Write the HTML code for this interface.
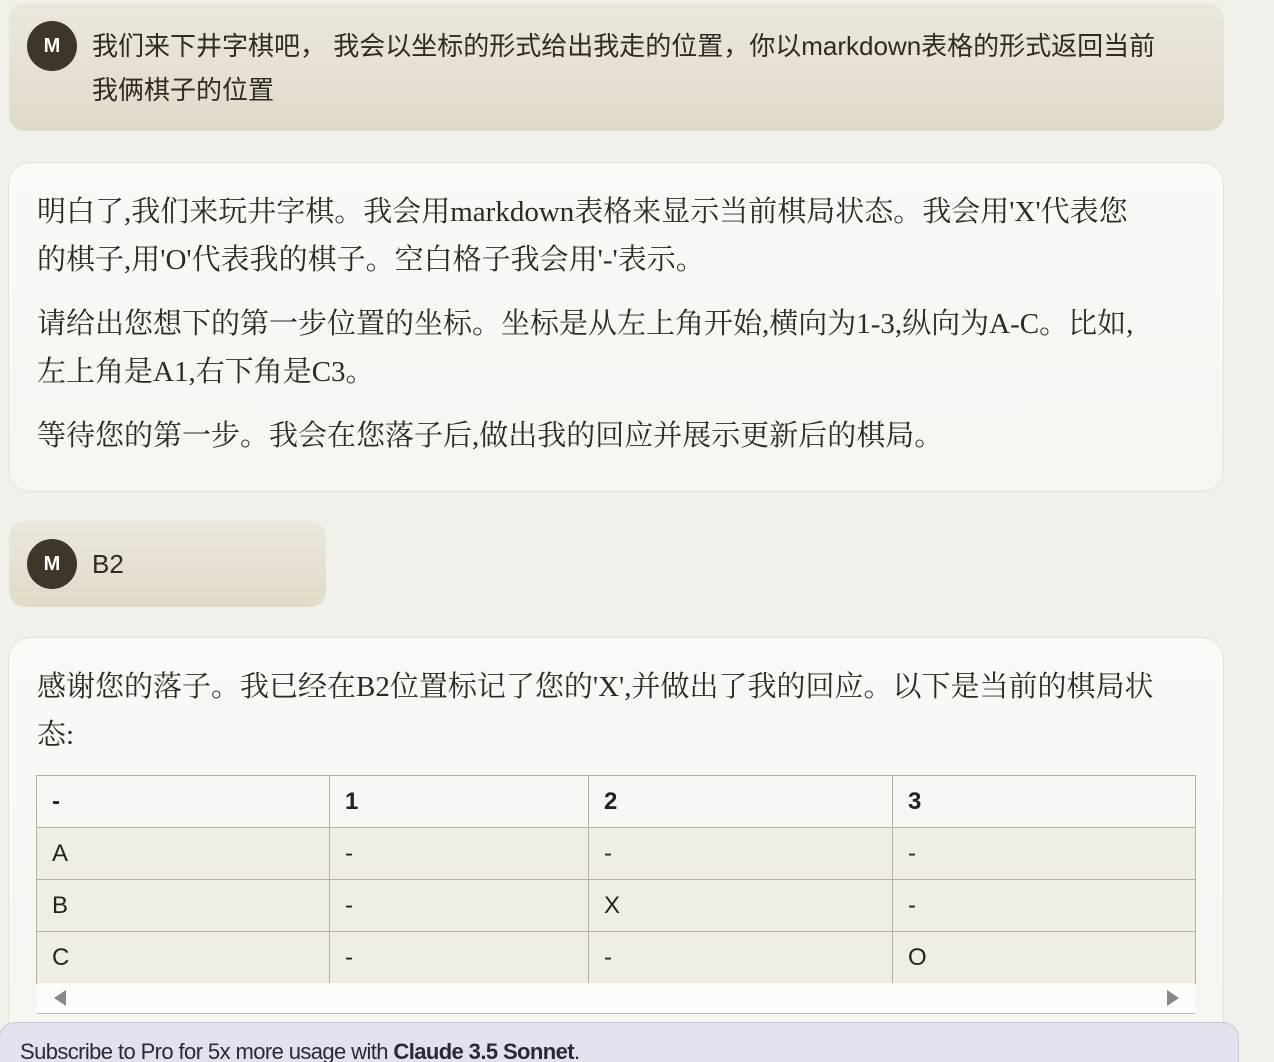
<!DOCTYPE html>
<html style="overflow:hidden;height:1062px"><head><meta charset="utf-8"><style>
body{margin:0;width:1274px;height:1062px;overflow:hidden;background:#f2f0ea;position:relative;font-family:"Liberation Sans","Noto Sans CJK SC",sans-serif;}
.u{position:absolute;left:9px;border-radius:16px;background:linear-gradient(#ebe7dd,#e0dac8);}
.av{position:absolute;left:27px;width:50px;height:50px;border-radius:50%;background:#3d3729;color:#fff;font-weight:bold;font-size:20px;text-align:center;line-height:50px;}
.ut{position:absolute;left:83px;color:#2f2b22;font-size:26px;line-height:44px;font-family:"Liberation Sans","Noto Sans CJK SC",sans-serif;}
.a{position:absolute;left:8px;width:1214px;border:1px solid #e5e1d6;border-radius:22px;background:linear-gradient(#faf9f6,#f6f5f0);overflow:hidden}
.at{position:absolute;left:28px;width:1100px;font-family:"Liberation Serif","Noto Serif CJK SC",serif;font-size:29px;line-height:48px;color:#2c2a25;}
.at p{margin:0 0 16px 0}
table{position:absolute;left:27px;top:137px;border-collapse:collapse;width:1160px;font-size:24px;color:#222;}
td,th{border:1px solid #b5b0a4;height:51px;padding:0 15px;text-align:left;}
th{background:#f7f6f2;font-weight:bold}
td{background:#f0ede5}
</style></head><body>
<div class="u" style="top:3px;width:1215px;height:128px"><div class="av" style="left:18px;top:18px">M</div>
<div class="ut" style="top:21px;width:1085px">我们来下井字棋吧， 我会以坐标的形式给出我走的位置，你以markdown表格的形式返回当前我俩棋子的位置</div></div>
<div class="a" style="top:162px;height:328px"><div class="at" style="top:25px">
<p>明白了,我们来玩井字棋。我会用markdown表格来显示当前棋局状态。我会用'X'代表您的棋子,用'O'代表我的棋子。空白格子我会用'-'表示。</p>
<p>请给出您想下的第一步位置的坐标。坐标是从左上角开始,横向为1-3,纵向为A-C。比如,左上角是A1,右下角是C3。</p>
<p>等待您的第一步。我会在您落子后,做出我的回应并展示更新后的棋局。</p></div></div>
<div class="u" style="top:521px;width:317px;height:86px"><div class="av" style="left:18px;top:18px">M</div>
<div class="ut" style="top:21px">B2</div></div>
<div class="a" style="top:637px;height:420px"><div class="at" style="top:25px;width:1120px">感谢您的落子。我已经在B2位置标记了您的'X',并做出了我的回应。以下是当前的棋局状态:</div>
<table><tr><th style="width:262px">-</th><th style="width:228px">1</th><th style="width:273px">2</th><th>3</th></tr>
<tr><td>A</td><td>-</td><td>-</td><td>-</td></tr>
<tr><td>B</td><td>-</td><td>X</td><td>-</td></tr>
<tr><td>C</td><td>-</td><td>-</td><td>O</td></tr></table>
<div style="position:absolute;left:28px;top:345px;width:1158px;height:30px;background:#fcfcfb;border-bottom:1px solid #bbb">
<div style="position:absolute;left:17px;top:7px;width:0;height:0;border-top:8px solid transparent;border-bottom:8px solid transparent;border-right:12px solid #888"></div>
<div style="position:absolute;right:16px;top:7px;width:0;height:0;border-top:8px solid transparent;border-bottom:8px solid transparent;border-left:12px solid #888"></div></div>
</div>
<div style="position:absolute;left:-1px;top:1022px;width:1238px;height:60px;background:#e4e1ef;border:1px solid #c9c5dd;border-radius:16px;">
<div style="position:absolute;left:20px;top:16px;font-size:22px;color:#2a2838;letter-spacing:-0.6px">Subscribe to Pro for 5x more usage with <b>Claude 3.5 Sonnet</b>.</div></div>
</body></html>
